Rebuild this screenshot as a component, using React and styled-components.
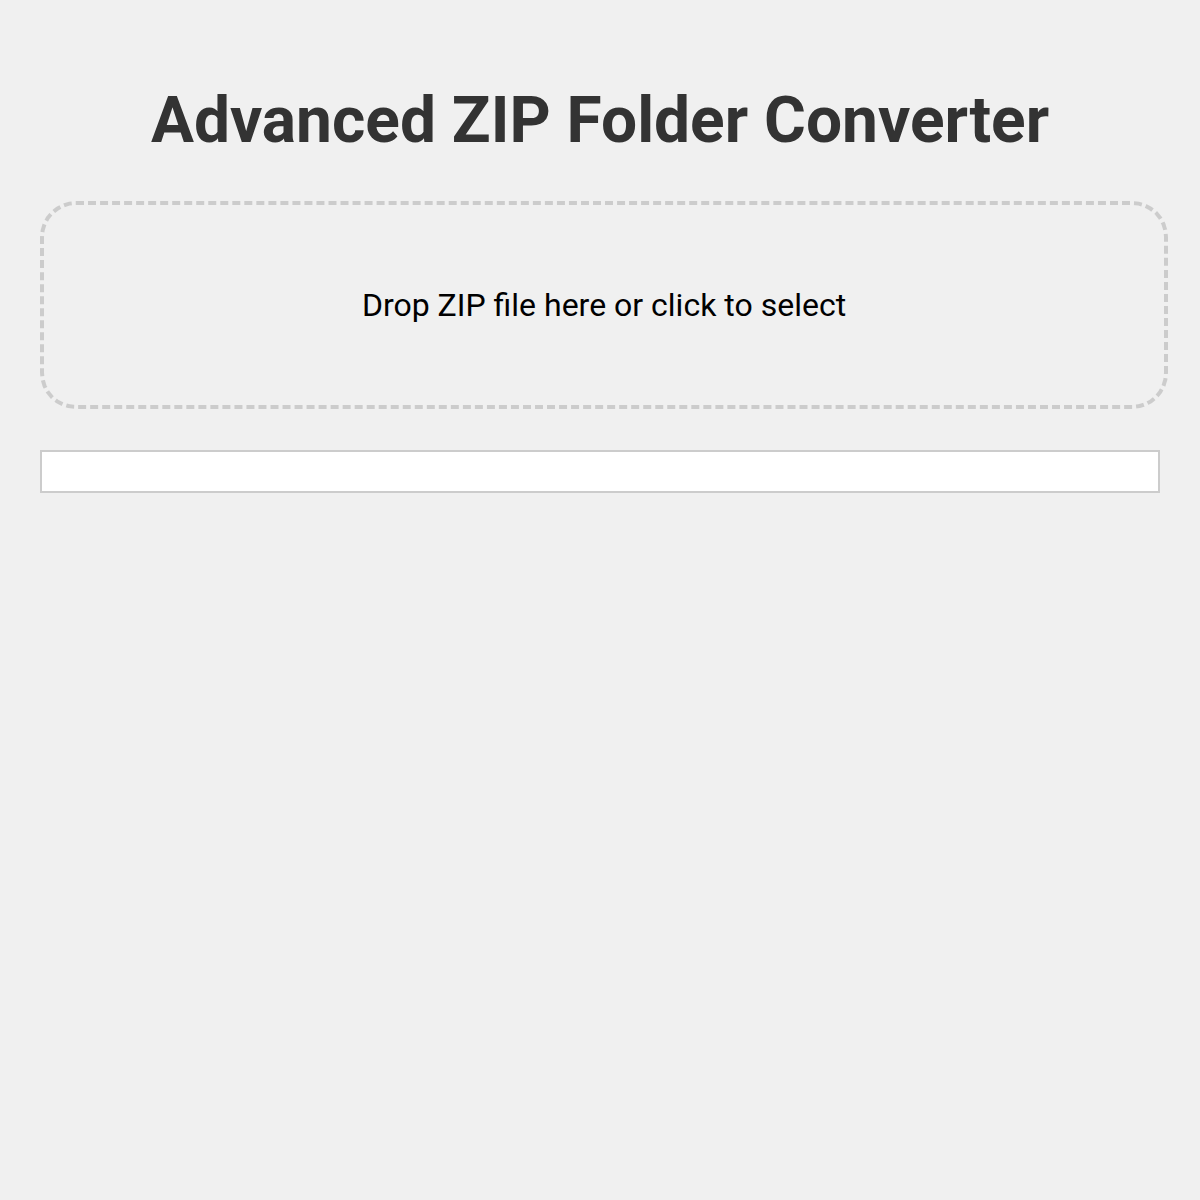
import React from "react";
import styled, { createGlobalStyle } from "styled-components";

const GlobalStyle = createGlobalStyle`
  html, body {
    margin: 0;
    padding: 0;
    background-color: #f0f0f0;
    font-family: Roboto, "Liberation Sans", Arial, sans-serif;
  }
`;

const Container = styled.div`
  padding: 40px;
  min-height: 1200px;
  box-sizing: border-box;
`;

const Title = styled.h1`
  margin: 43px 0 43px;
  text-align: center;
  font-size: 64px;
  font-weight: 700;
  line-height: 75px;
  color: #333;
`;

const DropZone = styled.div`
  width: 100%;
  padding: 86px 0;
  border: 4px dashed #ccc;
  border-radius: 36px;
  text-align: center;
  font-size: 32px;
  line-height: 28px;
  color: #000;
  cursor: pointer;
`;

const Output = styled.div`
  margin-top: 41px;
  height: 43px;
  box-sizing: border-box;
  border: 2px solid #ccc;
  background-color: #fff;
`;

const App = () => {
  return (
    <>
      <GlobalStyle />
      <Container>
        <Title>Advanced ZIP Folder Converter</Title>
        <DropZone>Drop ZIP file here or click to select</DropZone>
        <Output />
      </Container>
    </>
  );
};

export default App;
